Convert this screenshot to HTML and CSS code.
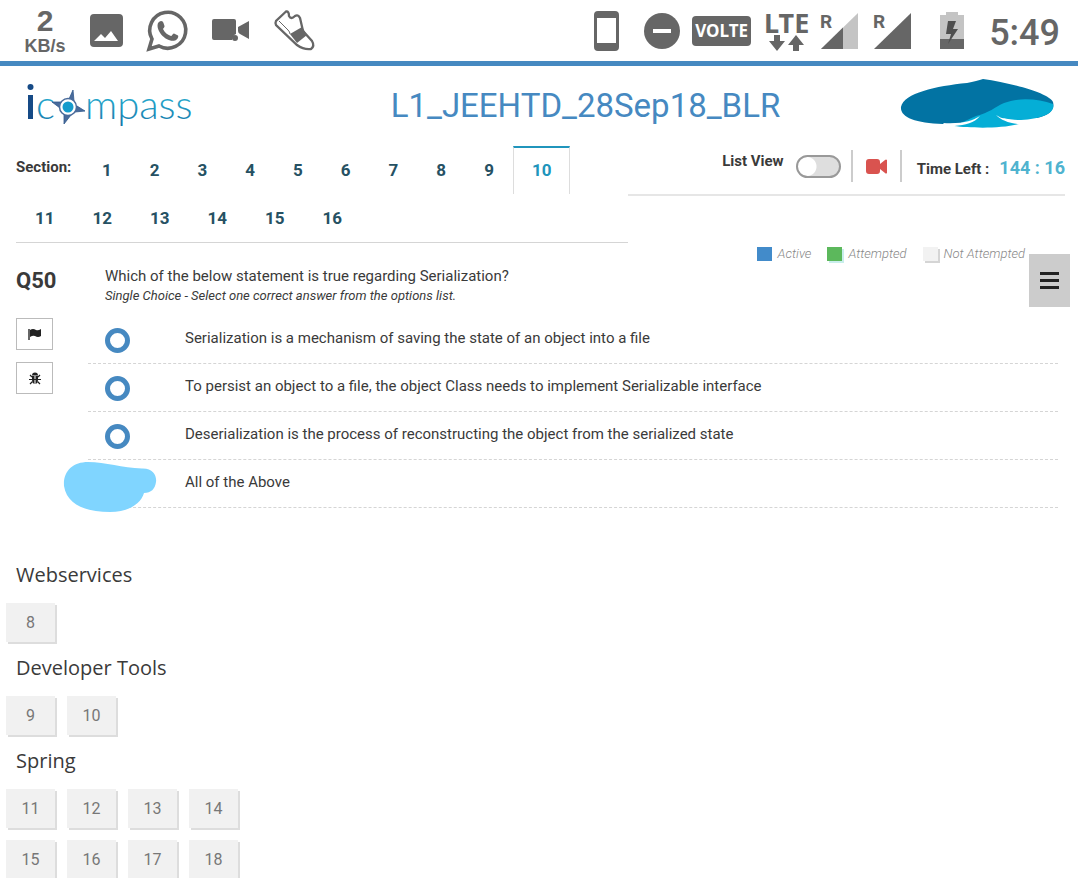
FILE: index.html
```html
<!DOCTYPE html>
<html lang="en">
<head>
<meta charset="utf-8">
<title>L1_JEEHTD_28Sep18_BLR</title>
<meta name="viewport" content="width=device-width, initial-scale=1">
<link rel="stylesheet" href="styles.css">
</head>
<body>
<div class="status">
  <div class="status-group left">
    <div class="speed"><span class="speed-num">2</span><span class="speed-unit">KB/s</span></div>
    <svg width="33" height="33" viewBox="0 0 33 33" fill="#666"><path fill-rule="evenodd" d="M4 0H29Q33 0 33 4V29Q33 33 29 33H4Q0 33 0 29V4Q0 0 4 0ZM4 27H28L21 17L15 24L11 20Z"/></svg>
    <svg width="41" height="41" viewBox="0 0 41 41"><path d="M2 39L5 29A18 18 0 1 1 12 36Z" fill="none" stroke="#666" stroke-width="3.6"/><path d="M12 12C14 10 16 11 16.500 13L17.500 16C18 17 16 18.500 16 19C18 23 21 25 24 26C25 26 26 23 27 23.500L31 25.500C32 27 30 30 28 30.500C20 33 8 21 11 13Z" fill="#666"/></svg>
    <svg width="38" height="26" viewBox="0 0 38 26" fill="#666"><path d="M2 1H22Q24 1 24 3V16Q21 17 20 22H2Q0 22 0 20V3Q0 1 2 1ZM26 9L37 3V21L28 16Q26 15 26 13Z"/><circle cx="23" cy="20" r="3"/></svg>
    <svg width="41" height="41" viewBox="0 0 41 41"><path d="M12 1.500L2 11Q1 13 2 15L23 35Q30 40 37 39Q41 36 38 31L29 21L26 8Q24 4 21 6Q17 10 15 6Q15 1 12 1.500Z" fill="#fff" stroke="#666" stroke-width="2.300"/><path d="M16 24L28 17L33 25L23 33Z" fill="#666"/><path d="M5 11L14 20Q16 22 16 24" stroke="#666" stroke-width="1" fill="none"/></svg>
  </div>
  <div class="status-group right">
    <svg width="25" height="40" viewBox="0 0 25 40"><path fill="#666" fill-rule="evenodd" d="M4 0H21Q25 0 25 4V36Q25 40 21 40H4Q0 40 0 36V4Q0 0 4 0ZM3 7V32H22V7Z"/></svg>
    <svg class="dnd" width="36" height="36" viewBox="0 0 36 36"><circle cx="18" cy="18" r="18" fill="#666"/><path d="M9 18H27" stroke="#fff" stroke-width="4"/></svg>
    <span class="volte">VOLTE</span>
    <div class="lte"><span>LTE</span><svg width="36" height="16" viewBox="0 0 36 16" fill="#666"><path d="M5 0H11V6H16L8 16L0 6H5ZM24 16H30V10H35L27 0L19 10H24Z"/></svg></div>
    <svg class="signal" width="37" height="37" viewBox="0 0 37 37"><path d="M37 1V37H0Z" fill="#c4c4c4"/><path d="M22 15.500V37H0Z" fill="#666"/><text x="-1" y="16" class="roam">R</text></svg>
    <svg class="signal second" width="37" height="37" viewBox="0 0 37 37"><path d="M37 1V37H0Z" fill="#666"/><text x="-1" y="16" class="roam">R</text></svg>
    <svg class="battery" width="24" height="37" viewBox="0 0 24 37"><path d="M6 0H18V3H24V37H0V3H6Z" fill="#c4c4c4"/><path d="M0 27H24V37H0Z" fill="#666"/><path d="M8 9H16L13 17H18L8 32L11 22H6Z" fill="#4f4f4f"/></svg>
    <span class="clock">5:49</span>
  </div>
</div>

<header class="header">
  <svg class="logo" role="img" aria-label="icompass" width="168" height="50" viewBox="0 0 168 50">
    <defs><linearGradient id="ink" x1="0" y1="0" x2="0" y2="1"><stop offset="0.3" stop-color="#28add0"/><stop offset="1" stop-color="#1673a8"/></linearGradient></defs>
    <path d="M2 11H7V35H2Z" fill="#164a86"/><circle cx="4.500" cy="3" r="3" fill="#164a86"/>
    <text x="10" y="35" class="logo-text" fill="url(#ink)">c</text>
    <path d="M47 6L49 18L59 27L47 29L39 40L36 29L26 18L39 16Z" fill="#fff"/><path d="M47 6L48 17L43 15ZM59 27L49 28L51 22ZM38 40L38 29L45 31ZM26 18L37 18L34 24Z" fill="#4a6b9b" stroke="#31598d" stroke-width="0.800"/>
    <circle cx="42" cy="23" r="8.500" fill="#fff" stroke="#4a6b9b" stroke-width="1.500"/><circle cx="42" cy="23" r="5.500" fill="#159bcc"/>
    <text x="59" y="35" class="logo-text" fill="url(#ink)">mpass</text>
  </svg>
  <h1 class="title">L1_JEEHTD_28Sep18_BLR</h1>
  <svg class="brand" width="153" height="50" viewBox="0 0 153 50"><path d="M0 28C3 14 35 7 66 4Q76 2 82 0C110 4 148 14 152 23Q155 35 136 39H80C70 43 58 45 42 45C14 44-1 38 0 28Z" fill="#0273a3"/><path d="M75 37C88 34 94 28 103 24C118 18 138 20 152 25C155 34 140 40 120 41C108 41 101 39 95 37L118 45C99 50 69 49 53 47Z" fill="#05aed6"/><path d="M42 44C62 45 71 42 79 37C73 44 65 46 53 47Q45 48 42 44ZM95 36C101 40 108 41 118 41V45C107 44 100 41 95 36Z" fill="#fff"/></svg>
</header>

<div class="toolbar">
  <nav class="sections" aria-label="Sections">
    <span class="sections-label">Section:</span>
    <a href="#s1">1</a><a href="#s2">2</a><a href="#s3">3</a><a href="#s4">4</a><a href="#s5">5</a><a href="#s6">6</a><a href="#s7">7</a><a href="#s8">8</a><a href="#s9">9</a><a class="active" href="#s10" aria-current="page">10</a><a href="#s11">11</a><a href="#s12">12</a><a href="#s13">13</a><a href="#s14">14</a><a href="#s15">15</a><a href="#s16">16</a>
  </nav>
  <div class="controls">
    <label class="list-label" for="list-view">List View</label>
    <input class="toggle" type="checkbox" id="list-view">
    <button class="camera" type="button" aria-label="Camera"><svg width="21" height="15" viewBox="0 0 21 15" fill="#d9534f"><path d="M3 0H11Q14 0 14 3V5L19 1Q20 0 21 1V14Q20 15 19 14L14 10V12Q14 15 11 15H3Q0 15 0 12V3Q0 0 3 0Z"/></svg></button>
    <span class="time-label">Time Left :</span>
    <span class="time">144 : 16</span>
  </div>
</div>

<main class="main">
  <button class="menu" type="button" aria-label="Menu"><svg width="19" height="17" viewBox="0 0 19 17"><path d="M0 1.500H19M0 8.500H19M0 15.500H19" stroke="#222" stroke-width="3"/></svg></button>
  <div class="legend">
    <span class="key blue">Active</span><span class="key green">Attempted</span><span class="key grey">Not Attempted</span>
  </div>
  <div class="question">
    <aside class="side">
      <h2 class="number">Q50</h2>
      <button class="tool" type="button" aria-label="Flag"><svg width="14" height="13" viewBox="0 0 14 13"><path d="M1 1V12" stroke="#333" stroke-width="1.500"/><path d="M2 2Q5 0 8 2Q10 3 13 1V8Q10 10 7 8Q5 7 2 9Z" fill="#222"/></svg></button>
      <button class="tool" type="button" aria-label="Report a bug"><svg width="12" height="13" viewBox="0 0 12 13"><path d="M3 3.500A3 3 0 0 1 9 3.500ZM3 4H5.500V12Q3 11 3 8ZM6.500 4H9V8Q9 11 6.500 12Z" fill="#222"/><path d="M0 7.500H12M1 3L3 5M11 3L9 5M1 12L3.500 9.500M11 12L8.500 9.500" stroke="#222" stroke-width="1.200"/></svg></button>
    </aside>
    <div class="body">
      <h3 class="prompt">Which of the below statement is true regarding Serialization?</h3>
      <p class="hint">Single Choice - Select one correct answer from the options list.</p>
      <div class="options">
        <div class="option"><input type="radio" name="answer" id="a1"><label for="a1">Serialization is a mechanism of saving the state of an object into a file</label></div>
        <div class="option"><input type="radio" name="answer" id="a2"><label for="a2">To persist an object to a file, the object Class needs to implement Serializable interface</label></div>
        <div class="option"><input type="radio" name="answer" id="a3"><label for="a3">Deserialization is the process of reconstructing the object from the serialized state</label></div>
        <div class="option"><input type="radio" name="answer" id="a4"><label for="a4">All of the Above</label>
          <svg class="blob" width="93" height="51" viewBox="0 0 93 51"><path d="M24 0C42 0 58 6 78 6.500C89 6 93 14 92 20C91 27 87 31 80 31C77 42 64 50 46 50C22 50 3 43 0 24C-1 9 9 0 24 0Z" fill="#80d5ff"/></svg>
        </div>
      </div>
    </div>
  </div>

  <section class="topic"><h2>Webservices</h2><div class="tiles"><button type="button">8</button></div></section>
  <section class="topic"><h2>Developer Tools</h2><div class="tiles"><button type="button">9</button><button type="button">10</button></div></section>
  <section class="topic"><h2>Spring</h2><div class="tiles"><button type="button">11</button><button type="button">12</button><button type="button">13</button><button type="button">14</button><button type="button">15</button><button type="button">16</button><button type="button">17</button><button type="button">18</button></div></section>
</main>
</body>
</html>
```
FILE: styles.css
```css
* { box-sizing: border-box; }
html { scrollbar-width: none; }
body { margin: 0; background: #fff; color: #3a3a3a; font-family: Roboto, "Liberation Sans", sans-serif; font-size: 15px; }
svg { display: block; flex: none; overflow: visible; }
h1, h2, h3, p { margin: 0; font-weight: 400; }
button { padding: 0; border: 0; background: none; font: inherit; display: flex; align-items: center; justify-content: center; }

.status { display: flex; justify-content: space-between; height: 66px; padding: 0 18px 0 24px; border-bottom: 5px solid #4689c1; color: #666; }
.status-group { display: flex; align-items: center; }
.left { gap: 24px; }
.speed { display: flex; flex-direction: column; align-items: center; width: 42px; font-family: "Liberation Sans", Arial, sans-serif; font-weight: 700; }
.speed-num { font-size: 30px; line-height: 30px; }
.speed-unit { font-size: 18px; line-height: 20px; }
.dnd { margin-left: 25px; }
.volte { margin-left: 12px; width: 59px; height: 30px; border-radius: 4px; background: #666; color: #fff; font: 700 17px/30px "Noto Sans", sans-serif; text-align: center; }
.lte { display: flex; flex-direction: column; align-items: center; width: 43px; margin-left: 14px; font: 700 27px/24px "Noto Sans", sans-serif; }
.signal { margin-left: 13px; }
.second { margin-left: 16px; }
.roam { font: 700 19px Roboto, sans-serif; fill: #666; }
.battery { margin-left: 29px; }
.clock { margin-left: 25px; font-size: 36px; font-weight: 500; line-height: 42px; padding-top: 4px; }

.header { display: flex; align-items: center; justify-content: space-between; height: 76px; padding: 0 24px 0 26px; }
.logo { margin-top: 10px; }
.logo-text { font: 300 40px Lato, sans-serif; }
.title { flex: 1; padding: 4px 0 0 76px; color: #4689c1; font-size: 33px; line-height: 40px; text-align: center; }

.toolbar { display: grid; grid-template-columns: 7fr 5fr; align-items: start; margin: 4px 13px 0 16px; }
.sections { display: flex; flex-wrap: wrap; border-bottom: 1px solid #d5d5d5; }
.sections-label { width: 67px; font-weight: 700; line-height: 42px; }
.sections a { height: 48px; padding: 0 18px; border: 1px solid transparent; border-width: 2px 1px 0; color: #265163; font-size: 17px; font-weight: 700; line-height: 44px; text-decoration: none; }
.sections .active { border-color: #2095bc #ddd; color: #2095bc; }
.controls { display: flex; align-items: center; justify-content: flex-end; height: 50px; padding-bottom: 8px; border-bottom: 2px solid #e6e6e6; }
.list-label { font-weight: 700; line-height: 20px; padding-bottom: 10px; margin-right: 12px; }
.toggle { appearance: none; width: 45px; height: 23px; margin: 0 10px 0 0; border: 2px solid #999; border-radius: 12px; background: radial-gradient(circle at 9px 50%, #fff 9px, transparent 10px), #dedede; }
.camera { width: 51px; height: 32px; border: 2px solid #ccc; border-width: 0 2px; }
.time-label { margin: 5px 10px 0 15px; font-weight: 700; line-height: 20px; }
.time { margin-top: 4px; color: #4fb3cf; font-size: 18px; font-weight: 700; line-height: 20px; }

.main { position: relative; padding-top: 3px; }
.menu { position: absolute; top: 11px; right: 8px; width: 41px; height: 53px; background: #ccc; }
.legend { display: flex; justify-content: flex-end; gap: 16px; padding: 0 53px 0 0; }
.key { display: flex; align-items: center; gap: 6px; color: #888; font-size: 13px; font-style: italic; font-weight: 300; line-height: 16px; }
.key::before { content: ""; width: 15px; height: 14px; background: #428bca; }
.green::before { background: #5cb85c; box-shadow: 2px 2px #c9eeec; }
.grey::before { background: #f2f2f2; box-shadow: 2px 2px #d5d5d5; }
.question { display: grid; grid-template-columns: 72px 1fr; padding: 3px 20px 0 16px; }
.side { display: flex; flex-direction: column; align-items: flex-start; gap: 12px; }
.number { height: 41px; font-size: 22px; font-weight: 700; line-height: 32px; }
.tool { width: 37px; height: 32px; border: 1px solid #bbb; }
.prompt { padding-left: 17px; font-size: 15px; line-height: 22px; }
.hint { padding-left: 17px; font-size: 13px; line-height: 18px; font-style: italic; }
.options { padding-top: 11px; }
.option { position: relative; display: flex; align-items: flex-start; gap: 55px; height: 48px; padding: 12px 0 0 17px; border-bottom: 1px dashed #d5d5d5; }
.option input { appearance: none; flex: none; width: 25px; height: 25px; margin: 0; border: 5px solid #4689c1; border-radius: 50%; }
.option label { line-height: 20px; }
.blob { position: absolute; left: -24px; top: 2px; }

.topic { padding: 0 6px; margin-bottom: 12px; }
.question + .topic { margin-top: 53px; }
.topic h2 { padding-left: 10px; margin-bottom: 14px; font: 400 20px/28px "Open Sans", sans-serif; }
.tiles { display: grid; grid-template-columns: repeat(4, 49px); gap: 12px; }
.tiles button { height: 39px; background: #f1f1f1; box-shadow: 2px 2px #ddd; color: #777; font-size: 16px; }
```
